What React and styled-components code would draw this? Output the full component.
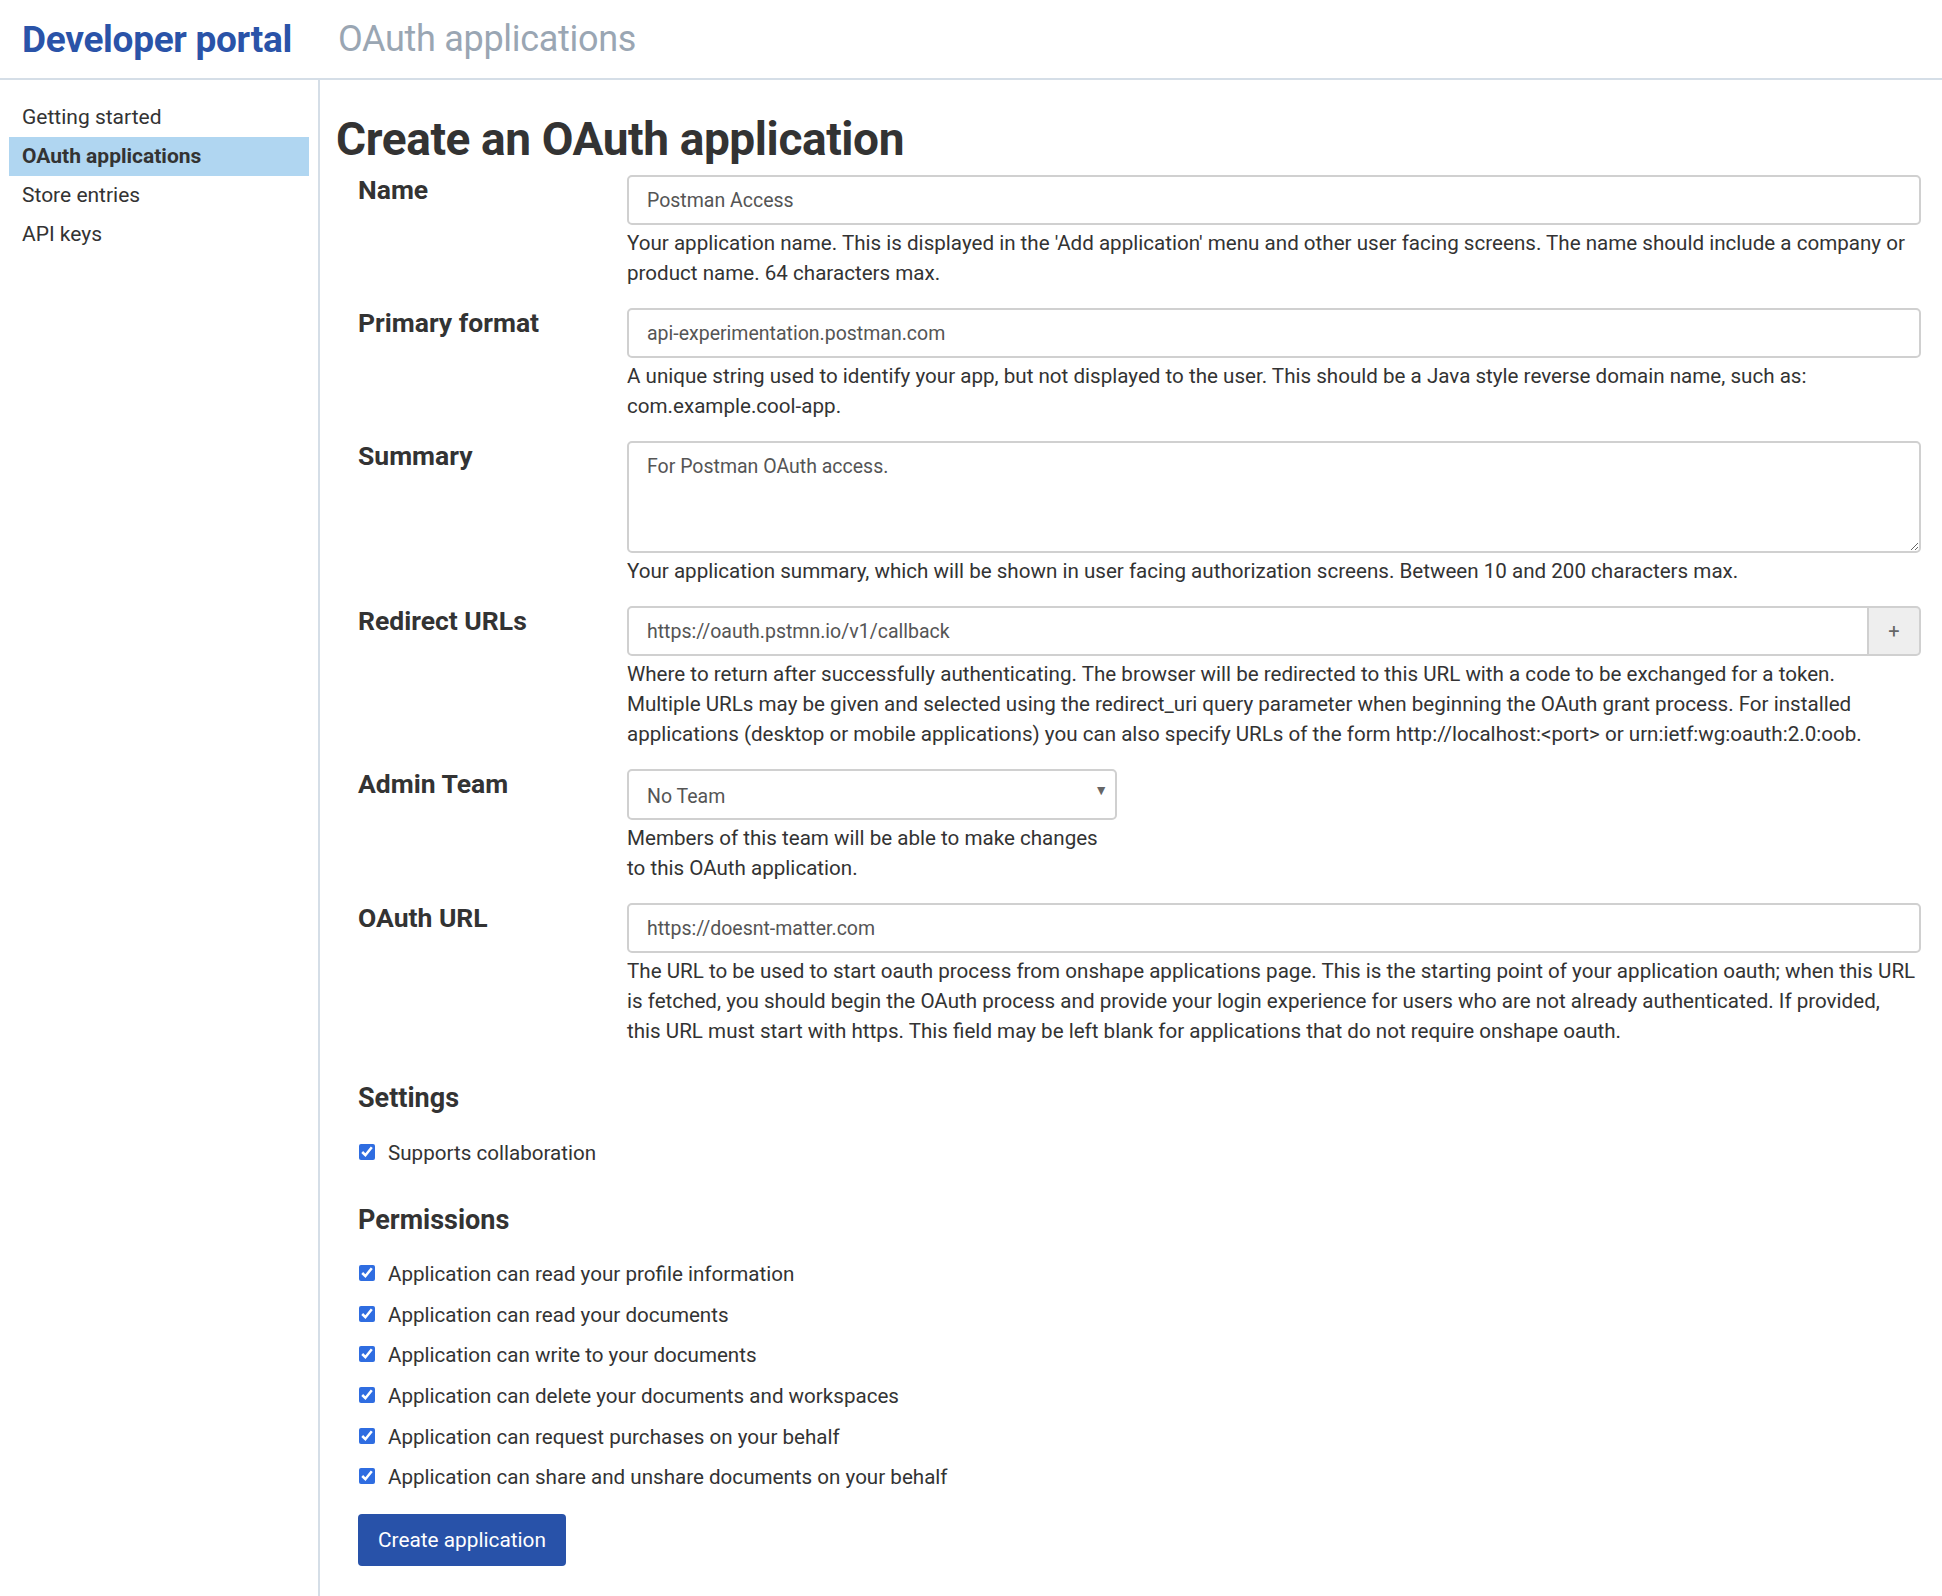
import React from "react";
import styled, {createGlobalStyle} from "styled-components";

const GlobalStyle = createGlobalStyle`
    html, body {
        margin: 0;
        padding: 0;
        background: #fff;
    }
    body {
        font-family: Roboto, "Noto Sans", sans-serif;
        color: #333;
    }
`;

const Page = styled.div`
    display: flex;
    flex-direction: column;
    min-height: 1596px;
`;

const Header = styled.header`
    display: flex;
    align-items: center;
    gap: 46px;
    height: 80px;
    padding: 0 22px;
    border-bottom: 2px solid #d5dee7;
    box-sizing: border-box;
`;

const Brand = styled.div`
    font-size: 37px;
    font-weight: 700;
    color: #2a53a8;
    letter-spacing: -0.3px;
`;

const SubTitle = styled.div`
    font-size: 36px;
    color: #9aa6b3;
    letter-spacing: -0.3px;
`;

const Body = styled.div`
    display: flex;
    flex: 1;
`;

const Sidebar = styled.nav`
    width: 320px;
    flex-shrink: 0;
    border-right: 2px solid #d5dee7;
    box-sizing: border-box;
    padding: 18px 9px 0 9px;
    display: flex;
    flex-direction: column;
`;

const NavItem = styled.div`
    font-size: 21px;
    line-height: 39px;
    height: 39px;
    padding-left: 13px;
    color: #333;
    font-weight: ${p => (p.$active ? 700 : 400)};
    background: ${p => (p.$active ? "#b0d6f1" : "transparent")};
`;

const Main = styled.main`
    flex: 1;
    padding: 36px 21px 30px 16px;
    display: flex;
    flex-direction: column;
`;

const Title = styled.h1`
    margin: 0;
    font-size: 46px;
    line-height: 46px;
    font-weight: 700;
    color: #333;
    letter-spacing: -0.4px;
`;

const Form = styled.div`
    padding-left: 22px;
    margin-top: 13px;
    display: flex;
    flex-direction: column;
`;

const Row = styled.div`
    display: grid;
    grid-template-columns: 269px 1fr;
    margin-bottom: 20px;
`;

const Label = styled.div`
    font-size: 26.5px;
    font-weight: 700;
    line-height: 30px;
    color: #333;
`;

const Field = styled.div`
    display: flex;
    flex-direction: column;
    max-width: ${p => p.$narrow ? "490px" : "none"};
`;

const TextInput = styled.input`
    height: 50px;
    box-sizing: border-box;
    border: 2px solid #d0d0d0;
    border-radius: 5px;
    padding: 0 18px;
    font-family: Roboto, sans-serif;
    font-size: 19.5px;
    color: #555;
    outline: none;
    width: 100%;
    ${p => p.$grouped && `
        border-top-right-radius: 0;
        border-bottom-right-radius: 0;
    `}
`;

const TextArea = styled.textarea`
    height: 112px;
    box-sizing: border-box;
    border: 2px solid #d0d0d0;
    border-radius: 5px;
    padding: 12px 18px;
    font-family: Roboto, sans-serif;
    font-size: 19.5px;
    color: #555;
    outline: none;
    resize: vertical;
    width: 100%;
`;

const InputGroup = styled.div`
    display: flex;
`;

const AddonButton = styled.button`
    width: 52px;
    height: 50px;
    flex-shrink: 0;
    box-sizing: border-box;
    border: 2px solid #d0d0d0;
    border-left: none;
    border-radius: 0 5px 5px 0;
    background: #eee;
    color: #666;
    font-size: 20px;
    font-family: Roboto, sans-serif;
`;

const SelectWrap = styled.div`
    position: relative;
    width: 490px;
`;

const Select = styled.select`
    appearance: none;
    width: 100%;
    height: 51px;
    box-sizing: border-box;
    border: 2px solid #d0d0d0;
    border-radius: 5px;
    padding: 4px 18px 0;
    font-family: Roboto, sans-serif;
    font-size: 19.5px;
    color: #555;
    background: #fff;
    outline: none;
`;

const Caret = styled.span`
    position: absolute;
    right: 9px;
    top: 13px;
    font-size: 14px;
    color: #666;
    pointer-events: none;
`;

const Help = styled.p`
    margin: 3px 0 0;
    font-size: 20.6px;
    line-height: 30px;
    color: #333;
`;

const SectionTitle = styled.h3`
    margin: ${p => p.$top || "20px"} 0 0;
    font-size: 27px;
    line-height: 30px;
    font-weight: 700;
    color: #333;
`;

const CheckList = styled.div`
    display: flex;
    flex-direction: column;
    margin-top: ${p => p.$top || "25px"};
`;

const CheckRow = styled.label`
    display: flex;
    align-items: center;
    height: ${p => p.$h || "40px"};
    font-size: 20.6px;
    color: #333;
`;

const Check = styled.input`
    width: 16px;
    height: 16px;
    margin: 0 13px 2px 1px;
    accent-color: #2f6de1;
`;

const SubmitButton = styled.button`
    align-self: flex-start;
    margin-top: 16px;
    width: 208px;
    height: 52px;
    border: none;
    border-radius: 4px;
    background: #2852a9;
    color: #fff;
    font-family: Roboto, sans-serif;
    font-size: 20.8px;
`;

const navItems = ["Getting started", "OAuth applications", "Store entries", "API keys"];

const permissions = [
    "Application can read your profile information",
    "Application can read your documents",
    "Application can write to your documents",
    "Application can delete your documents and workspaces",
    "Application can request purchases on your behalf",
    "Application can share and unshare documents on your behalf",
];

const App = () => {
    return (
        <Page>
            <GlobalStyle/>
            <Header>
                <Brand>Developer portal</Brand>
                <SubTitle>OAuth applications</SubTitle>
            </Header>
            <Body>
                <Sidebar>
                    {navItems.map(item => (
                        <NavItem key={item} $active={item === "OAuth applications"}>
                            {item}
                        </NavItem>
                    ))}
                </Sidebar>
                <Main>
                    <Title>Create an OAuth application</Title>
                    <Form>
                        <Row>
                            <Label>Name</Label>
                            <Field>
                                <TextInput defaultValue="Postman Access"/>
                                <Help>
                                    Your application name. This is displayed in the 'Add application' menu and other user facing screens. The name should include a company or product name. 64 characters max.
                                </Help>
                            </Field>
                        </Row>
                        <Row>
                            <Label>Primary format</Label>
                            <Field>
                                <TextInput defaultValue="api-experimentation.postman.com"/>
                                <Help>
                                    A unique string used to identify your app, but not displayed to the user. This should be a Java style reverse domain name, such as: com.example.cool-app.
                                </Help>
                            </Field>
                        </Row>
                        <Row>
                            <Label>Summary</Label>
                            <Field>
                                <TextArea defaultValue="For Postman OAuth access."/>
                                <Help>
                                    Your application summary, which will be shown in user facing authorization screens. Between 10 and 200 characters max.
                                </Help>
                            </Field>
                        </Row>
                        <Row>
                            <Label>Redirect URLs</Label>
                            <Field>
                                <InputGroup>
                                    <TextInput $grouped defaultValue="https://oauth.pstmn.io/v1/callback"/>
                                    <AddonButton>+</AddonButton>
                                </InputGroup>
                                <Help>
                                    Where to return after successfully authenticating. The browser will be redirected to this URL with a code to be exchanged for a token.<br/>
                                    Multiple URLs may be given and selected using the redirect_uri query parameter when beginning the OAuth grant process. For installed<br/>
                                    applications (desktop or mobile applications) you can also specify URLs of the form http://localhost:&lt;port&gt; or urn:ietf:wg:oauth:2.0:oob.
                                </Help>
                            </Field>
                        </Row>
                        <Row>
                            <Label>Admin Team</Label>
                            <Field $narrow>
                                <SelectWrap>
                                    <Select defaultValue="none">
                                        <option value="none">No Team</option>
                                    </Select>
                                    <Caret>▼</Caret>
                                </SelectWrap>
                                <Help>
                                    Members of this team will be able to make changes to this OAuth application.
                                </Help>
                            </Field>
                        </Row>
                        <Row>
                            <Label>OAuth URL</Label>
                            <Field>
                                <TextInput defaultValue="https://doesnt-matter.com"/>
                                <Help>
                                    The URL to be used to start oauth process from onshape applications page. This is the starting point of your application oauth; when this URL is fetched, you should begin the OAuth process and provide your login experience for users who are not already authenticated. If provided,<br/>
                                    this URL must start with https. This field may be left blank for applications that do not require onshape oauth.
                                </Help>
                            </Field>
                        </Row>

                        <SectionTitle $top="17px">Settings</SectionTitle>
                        <CheckList $top="20px">
                            <CheckRow>
                                <Check type="checkbox" defaultChecked/>
                                Supports collaboration
                            </CheckRow>
                        </CheckList>

                        <SectionTitle $top="32px">Permissions</SectionTitle>
                        <CheckList $top="19px">
                            {permissions.map(p => (
                                <CheckRow key={p} $h="40.6px">
                                    <Check type="checkbox" defaultChecked/>
                                    {p}
                                </CheckRow>
                            ))}
                        </CheckList>

                        <SubmitButton>Create application</SubmitButton>
                    </Form>
                </Main>
            </Body>
        </Page>
    );
};

export default App;
